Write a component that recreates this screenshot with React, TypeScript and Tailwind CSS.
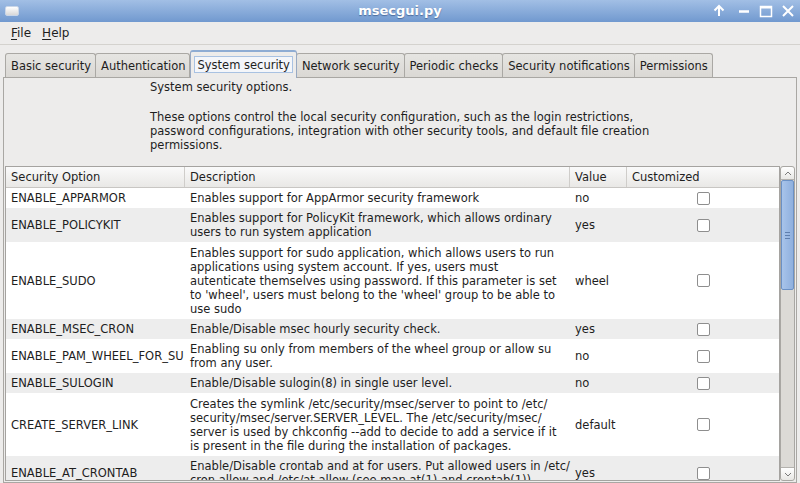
import React from 'react';

interface Row {
  option: string;
  lines: string[];
  value: string;
}

const rows: Row[] = [
  { option: 'ENABLE_APPARMOR', lines: ['Enables support for AppArmor security framework'], value: 'no' },
  {
    option: 'ENABLE_POLICYKIT',
    lines: ['Enables support for PolicyKit framework, which allows ordinary', 'users to run system application'],
    value: 'yes',
  },
  {
    option: 'ENABLE_SUDO',
    lines: [
      'Enables support for sudo application, which allows users to run',
      'applications using system account. If yes, users must',
      'autenticate themselves using password. If this parameter is set',
      "to 'wheel', users must belong to the 'wheel' group to be able to",
      'use sudo',
    ],
    value: 'wheel',
  },
  { option: 'ENABLE_MSEC_CRON', lines: ['Enable/Disable msec hourly security check.'], value: 'yes' },
  {
    option: 'ENABLE_PAM_WHEEL_FOR_SU',
    lines: ['Enabling su only from members of the wheel group or allow su', 'from any user.'],
    value: 'no',
  },
  { option: 'ENABLE_SULOGIN', lines: ['Enable/Disable sulogin(8) in single user level.'], value: 'no' },
  {
    option: 'CREATE_SERVER_LINK',
    lines: [
      'Creates the symlink /etc/security/msec/server to point to /etc/',
      'security/msec/server.SERVER_LEVEL. The /etc/security/msec/',
      'server is used by chkconfig --add to decide to add a service if it',
      'is present in the file during the installation of packages.',
    ],
    value: 'default',
  },
  {
    option: 'ENABLE_AT_CRONTAB',
    lines: [
      'Enable/Disable crontab and at for users. Put allowed users in /etc/',
      'cron.allow and /etc/at.allow (see man at(1) and crontab(1)).',
    ],
    value: 'yes',
  },
];

const tabs = [
  'Basic security',
  'Authentication',
  'System security',
  'Network security',
  'Periodic checks',
  'Security notifications',
  'Permissions',
];

function TitleBar() {
  return (
    <div className="relative h-[22px] shrink-0 bg-gradient-to-b from-[#a2bfe5] to-[#7199cf] flex items-center">
      {/* window icon */}
      <div className="ml-[5px] w-[14px] h-[10px] rounded-[2px] bg-gradient-to-b from-[#ffffff] to-[#d8d8d8] border border-[#c9d6e8]" />
      <div className="absolute left-0 right-0 text-center text-white font-bold text-[13px] leading-[22px] [text-shadow:0_1px_1px_rgba(40,70,120,0.6)]">
        msecgui.py
      </div>
      <div className="ml-auto flex items-center gap-[8px] mr-[5px] relative">
        <svg width="14" height="14" viewBox="0 0 14 14" className="mr-[3px]">
          <path d="M7 12V2M2.5 6.5L7 2l4.5 4.5" stroke="white" strokeWidth="2" fill="none" />
        </svg>
        <svg width="14" height="14" viewBox="0 0 14 14">
          <path d="M2 7.5h10" stroke="white" strokeWidth="2.5" fill="none" />
        </svg>
        <svg width="14" height="14" viewBox="0 0 14 14">
          <rect x="1.5" y="2.5" width="11" height="10" stroke="white" strokeWidth="1.5" fill="none" />
          <path d="M1.5 3.5h11" stroke="white" strokeWidth="2" />
        </svg>
        <svg width="14" height="14" viewBox="0 0 14 14">
          <path d="M2 2l10 10M12 2L2 12" stroke="white" strokeWidth="2" fill="none" />
        </svg>
      </div>
    </div>
  );
}

function MenuBar() {
  return (
    <div className="h-[23px] shrink-0 flex items-center gap-[11px] pl-[11px] text-[12px] border-b border-[#d4d2ce]">
      <span>
        <span className="underline underline-offset-2">F</span>ile
      </span>
      <span>
        <span className="underline underline-offset-2">H</span>elp
      </span>
    </div>
  );
}

function Tabs() {
  return (
    <div className="h-[32px] shrink-0 flex items-end pl-[5px]">
      {tabs.map(t =>
        t === 'System security' ? (
          <div
            key={t}
            className="h-[28px] -mb-px z-10 px-[3px] pt-[4px] bg-[#edeceb] border border-b-0 border-[#98a9c2] rounded-t-[3px] border-t-2 border-t-[#8eacd3]"
          >
            <div className="px-[2px] h-[17px] leading-[16px] border border-[#a9c2e2] bg-[#f4f6fa]">{t}</div>
          </div>
        ) : (
          <div
            key={t}
            className="h-[24px] pl-[5px] pr-[4px] leading-[24px] bg-gradient-to-b from-[#e6e5e2] to-[#dad8d4] border border-b-0 border-[#aaa8a4] rounded-t-[3px] -ml-px first:ml-0"
          >
            {t}
          </div>
        )
      )}
    </div>
  );
}

function Checkbox() {
  return <div className="w-[13px] h-[13px] rounded-[2px] border border-[#8e8e8e] bg-white" />;
}

function Scrollbar() {
  return (
    <div className="w-[15px] shrink-0 flex flex-col bg-[#dcdad6] border border-[#a9a7a3] rounded-[3px]">
      <div className="h-[13px] flex items-center justify-center bg-gradient-to-b from-white to-[#e8e7e4] rounded-t-[3px] border-b border-[#b4b2ae]">
        <svg width="8" height="5" viewBox="0 0 8 5">
          <path d="M1 4l3-3 3 3" stroke="#7a7a7a" strokeWidth="1" fill="none" />
        </svg>
      </div>
      <div className="flex-1 flex flex-col">
        <div className="h-[110px] bg-gradient-to-r from-[#a8c4ea] to-[#8fb0de] border border-[#6b91c5] rounded-[2px] flex flex-col items-center justify-center gap-[2px]">
          <div className="w-[5px] h-px bg-[#5f7fae]" />
          <div className="w-[5px] h-px bg-[#5f7fae]" />
          <div className="w-[5px] h-px bg-[#5f7fae]" />
        </div>
      </div>
      <div className="h-[13px] flex items-center justify-center bg-gradient-to-b from-white to-[#e8e7e4] rounded-b-[3px] border-t border-[#b4b2ae]">
        <svg width="8" height="5" viewBox="0 0 8 5">
          <path d="M1 1l3 3 3-3" stroke="#7a7a7a" strokeWidth="1" fill="none" />
        </svg>
      </div>
    </div>
  );
}

function OptionsTable() {
  return (
    <div className="flex-1 min-h-0 flex ml-[1px] mr-[1px]">
      <div className="flex-1 min-w-0 border border-[#a5a3a0] bg-white overflow-hidden">
        {/* header */}
        <div className="flex h-[21px] bg-gradient-to-b from-[#fafafa] to-[#e9e8e6] border-b border-[#c8c6c3]">
          <div className="w-[179px] pl-[5px] leading-[21px] border-r border-[#cfcdca]">Security Option</div>
          <div className="w-[385px] pl-[5px] leading-[21px] border-r border-[#cfcdca]">Description</div>
          <div className="w-[57px] pl-[5px] leading-[21px] border-r border-[#cfcdca]">Value</div>
          <div className="flex-1 pl-[5px] leading-[21px]">Customized</div>
        </div>
        {rows.map((r, i) => (
          <div
            key={r.option}
            className={`flex items-center ${r.lines.length > 2 ? 'py-[3.5px]' : 'py-[3px]'} ${i % 2 === 1 ? 'bg-[#ededed]' : 'bg-white'}`}
          >
            <div className="w-[179px] pl-[5px] whitespace-nowrap">{r.option}</div>
            <div className="w-[385px] pl-[5px]">
              {r.lines.map(l => (
                <div key={l} className="whitespace-nowrap">
                  {l}
                </div>
              ))}
            </div>
            <div className="w-[57px] pl-[5px]">{r.value}</div>
            <div className="flex-1 flex justify-center pl-[1px]">
              <Checkbox />
            </div>
          </div>
        ))}
      </div>
      <Scrollbar />
    </div>
  );
}

export default function App() {
  return (
    <div className="w-[800px] h-[483px] overflow-hidden flex flex-col bg-[#edeceb] text-[#1e1e1e] text-[11.5px] leading-[14px] font-['DejaVu_Sans',sans-serif]">
      <TitleBar />
      <MenuBar />
      <Tabs />
      {/* notebook page */}
      <div className="flex-1 min-h-0 flex flex-col mx-[3px] border border-[#a9a7a3] pt-[2px] pb-[1px]">
        <div className="pl-[146px] shrink-0">
          <div>System security options.</div>
          <div className="mt-[16px]">These options control the local security configuration, such as the login restrictions,</div>
          <div>password configurations, integration with other security tools, and default file creation</div>
          <div>permissions.</div>
        </div>
        <div className="h-[14px] shrink-0" />
        <OptionsTable />
      </div>
    </div>
  );
}
